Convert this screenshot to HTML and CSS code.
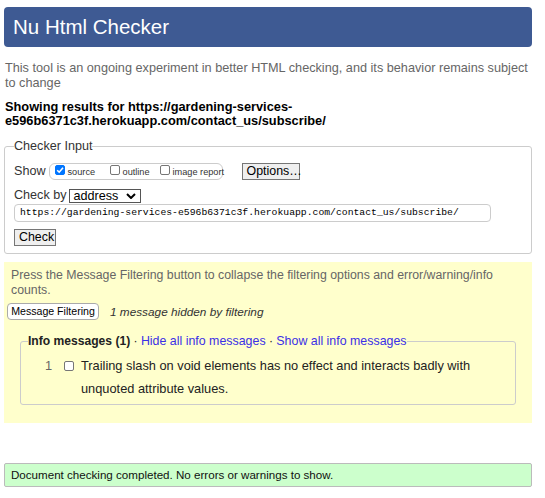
FILE: index.html
```html
<!DOCTYPE html>
<html>
<head>
<meta charset="utf-8">
<title>Nu Html Checker</title>
<link rel="stylesheet" href="styles.css">
</head>
<body>
<div class="page">
  <h1 class="title">Nu Html Checker</h1>
  <p class="intro">This tool is an ongoing experiment in better HTML checking, and its behavior remains subject to change</p>
  <p class="showing">Showing results for https://gardening-services-<br>e596b6371c3f.herokuapp.com/contact_us/subscribe/</p>

  <fieldset class="checker">
    <legend class="checker-legend">Checker Input</legend>
    <div class="row show-row">
      <span class="label">Show</span>
      <span class="opts">
        <span class="opt"><span class="cb checked"><svg viewBox="0 0 10 10" width="10" height="10"><path d="M2.2 5.2 L4.2 7.2 L8 2.8" fill="none" stroke="#fff" stroke-width="1.6"/></svg></span>source</span>
        <span class="opt"><span class="cb"></span>outline</span>
        <span class="opt"><span class="cb"></span>image report</span>
      </span>
      <span class="btn options">Options…</span>
    </div>
    <div class="row checkby-row">
      <span class="label">Check by</span>
      <span class="select">address<svg class="chev" viewBox="0 0 10 6" width="10" height="6"><path d="M1 1 L5 5 L9 1" fill="none" stroke="#000" stroke-width="2"/></svg></span>
    </div>
    <div class="url">https://gardening-services-e596b6371c3f.herokuapp.com/contact_us/subscribe/</div>
    <div class="row check-row"><span class="btn check">Check</span></div>
  </fieldset>

  <section class="filters">
    <p class="filter-note">Press the Message Filtering button to collapse the filtering options and error/warning/info counts.</p>
    <div class="filter-row">
      <span class="btn mf">Message Filtering</span>
      <em class="hidden-note">1 message hidden by filtering</em>
    </div>
    <fieldset class="info">
      <legend class="info-legend"><b>Info messages (1)</b> · <a class="lnk">Hide all info messages</a> · <a class="lnk">Show all info messages</a></legend>
      <div class="msg">
        <span class="num">1</span>
        <span class="cb msg-cb"></span>
        <span class="msg-text">Trailing slash on void elements has no effect and interacts badly with unquoted attribute values.</span>
      </div>
    </fieldset>
  </section>

  <div class="done">Document checking completed. No errors or warnings to show.</div>
</div>
</body>
</html>
```
FILE: styles.css
```css
html, body {
  margin: 0;
  padding: 0;
  background: #fff;
}
body {
  font-family: "Liberation Sans", Arial, sans-serif;
  font-size: 12.8px;
  color: #000;
}
.page {
  padding: 7px 13px 0 4px;
}
.title {
  margin: 0;
  height: 40px;
  line-height: 40px;
  padding-left: 9px;
  background: #3e5a93;
  color: #fff;
  font-size: 20.5px;
  font-weight: normal;
  border-radius: 4px;
}
.intro {
  margin: 14px 0 0 1px;
  color: #666;
  font-size: 12.7px;
  line-height: 15px;
}
.showing {
  margin: 9px 0 0 1px;
  font-weight: bold;
  line-height: 13.5px;
}
.checker {
  margin: 12px 0 0 0;
  padding: 0 9px 7px 9px;
  border: 1px solid #ccc;
  border-radius: 3px;
}
.checker-legend {
  padding: 0;
  font-size: 12.6px;
  line-height: 15px;
  color: #333;
}
.row {
  display: flex;
  align-items: center;
}
.label {
  font-size: 12.6px;
  line-height: 15px;
  color: #333;
  margin-right: 2px;
  margin-left: 0;
  white-space: nowrap;
}
.show-row {
  margin-top: 9px;
}
.show-row .label {
  margin-right: 3px;
}
.opts {
  display: inline-flex;
  align-items: center;
  box-sizing: border-box;
  border: 1px solid #ccc;
  border-radius: 6px;
  height: 17px;
  width: 174px;
  padding: 0 5px;
  font-size: 9.2px;
  color: #333;
  white-space: nowrap;
  flex: none;
}
.opt {
  display: inline-flex;
  align-items: center;
  flex: none;
}
.opt:nth-child(1) { width: 55px; }
.opt:nth-child(2) { width: 50px; }
.cb {
  display: inline-block;
  box-sizing: border-box;
  width: 10px;
  height: 10px;
  border: 1px solid #767676;
  border-radius: 2px;
  background: #fff;
  margin-right: 3px;
  margin-top: -3px;
  flex: none;
}
.cb.checked {
  background: #0075ff;
  border-color: #0075ff;
}
.cb svg {
  display: block;
  margin: -1px;
}
.btn {
  display: inline-block;
  box-sizing: border-box;
  border: 1px solid #767676;
  background: #efefef;
  color: #000;
  font-size: 12.4px;
  line-height: 14px;
  padding: 0 4px;
  text-align: center;
  white-space: nowrap;
}
.options {
  margin-left: 19px;
  height: 17px;
  width: 58px;
}
.checkby-row {
  margin-top: 8px;
}
.select {
  display: inline-flex;
  align-items: center;
  box-sizing: border-box;
  height: 14px;
  width: 72px;
  border: 1px solid #555;
  padding: 0 4px;
  font-size: 12.6px;
  background: #fff;
  justify-content: space-between;
}
.url {
  margin-top: 1px;
  box-sizing: border-box;
  height: 18px;
  width: 477px;
  border: 1px solid #ccc;
  border-radius: 4px;
  padding: 0 5px;
  font-family: "Liberation Mono", "Courier New", monospace;
  font-size: 9.75px;
  line-height: 16px;
  color: #000;
}
.check-row {
  margin-top: 7px;
}
.check {
  height: 17px;
  width: 42px;
}
.filters {
  margin-top: 8px;
  background: #ffffcc;
  padding: 6px 16px 18px 3px;
}
.filter-note {
  margin: 0 0 0 4px;
  color: #666;
  font-size: 12.3px;
  line-height: 15px;
}
.filter-row {
  margin-top: 5px;
  display: flex;
  align-items: center;
}
.mf {
  background: #fff;
  border: 1px solid #aaa;
  border-radius: 4px;
  font-size: 10.6px;
  height: 17px;
  line-height: 15px;
  width: 92px;
  padding: 0;
}
.hidden-note {
  margin-left: 11px;
  font-size: 11.8px;
  color: #333;
}
.info {
  margin: 14px 0 0 13px;
  padding: 6px 10px 4px 7px;
  border: 1px solid #ccc;
  border-radius: 3px;
}
.info-legend {
  padding: 0;
  font-size: 12.1px;
  line-height: 14px;
  color: #222;
}
.lnk {
  color: #3b2fe6;
  font-weight: normal;
  font-size: 12.4px;
}
.msg {
  display: flex;
  align-items: flex-start;
  line-height: 23px;
  color: #222;
}
.num {
  width: 24px;
  text-align: right;
  color: #666;
  flex: none;
}
.msg-cb {
  margin: 7px 0 0 12px;
}
.msg-text {
  margin-left: 7px;
}
.done {
  margin-top: 40px;
  box-sizing: border-box;
  height: 24px;
  line-height: 22px;
  background: #ccffcc;
  border: 1px solid #bbb;
  border-radius: 2px;
  padding-left: 6px;
  font-size: 11.6px;
  color: #111;
}
```
